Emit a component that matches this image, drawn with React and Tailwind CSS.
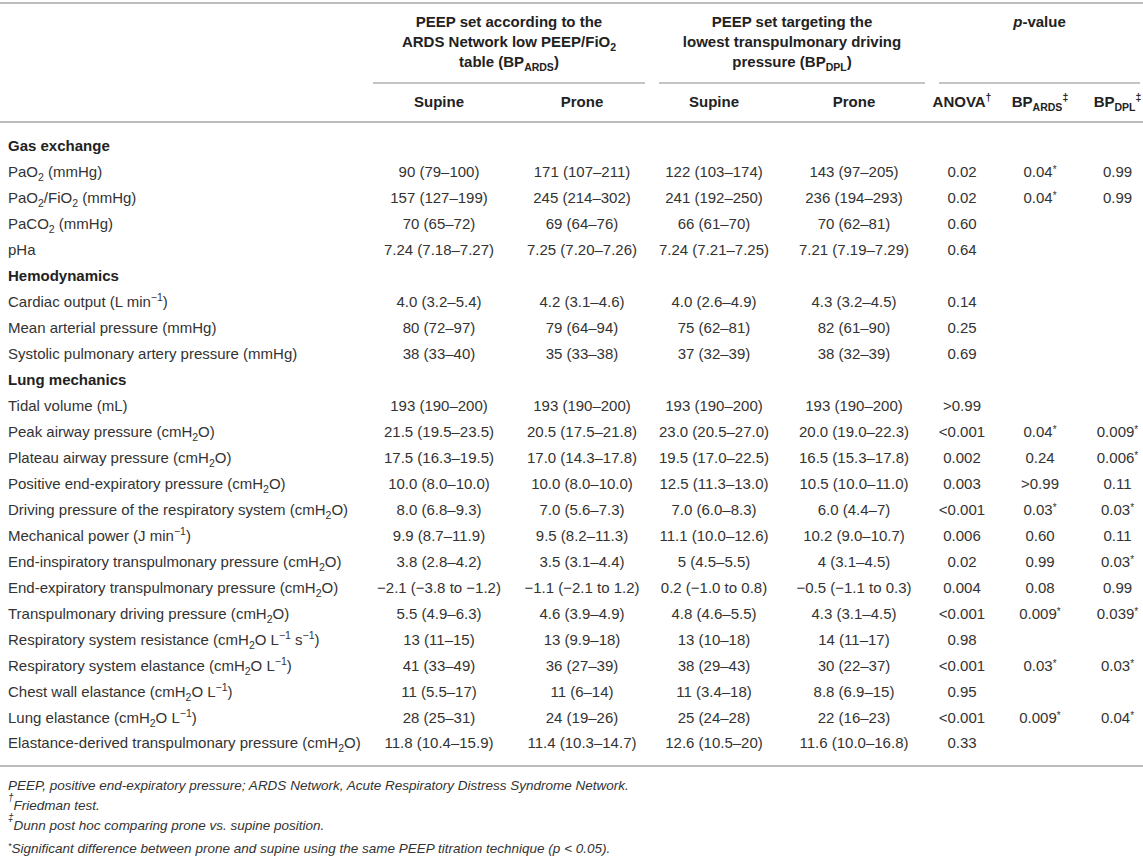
import React from "react";

const Sub = ({ children }) => (
  <span className="relative top-[4px] text-[10.5px] leading-none">{children}</span>
);
const Sup = ({ children }) => (
  <span className="relative -top-[6px] text-[10.5px] leading-none">{children}</span>
);

const H2O = (
  <>
    cmH<Sub>2</Sub>O
  </>
);

// value cell: a trailing "*" is drawn small and raised
function Val({ v }) {
  if (!v) return null;
  if (v.endsWith("*")) {
    return (
      <>
        {v.slice(0, -1)}
        <span className="relative -top-[4px] text-[10px] leading-none">*</span>
      </>
    );
  }
  return v;
}

const rows = [
  { section: "Gas exchange" },
  { label: <>PaO<Sub>2</Sub> (mmHg)</>, v: ["90 (79–100)", "171 (107–211)", "122 (103–174)", "143 (97–205)", "0.02", "0.04*", "0.99"] },
  { label: <>PaO<Sub>2</Sub>/FiO<Sub>2</Sub> (mmHg)</>, v: ["157 (127–199)", "245 (214–302)", "241 (192–250)", "236 (194–293)", "0.02", "0.04*", "0.99"] },
  { label: <>PaCO<Sub>2</Sub> (mmHg)</>, v: ["70 (65–72)", "69 (64–76)", "66 (61–70)", "70 (62–81)", "0.60"] },
  { label: "pHa", v: ["7.24 (7.18–7.27)", "7.25 (7.20–7.26)", "7.24 (7.21–7.25)", "7.21 (7.19–7.29)", "0.64"] },
  { section: "Hemodynamics" },
  { label: <>Cardiac output (L min<Sup>−1</Sup>)</>, v: ["4.0 (3.2–5.4)", "4.2 (3.1–4.6)", "4.0 (2.6–4.9)", "4.3 (3.2–4.5)", "0.14"] },
  { label: "Mean arterial pressure (mmHg)", v: ["80 (72–97)", "79 (64–94)", "75 (62–81)", "82 (61–90)", "0.25"] },
  { label: "Systolic pulmonary artery pressure (mmHg)", v: ["38 (33–40)", "35 (33–38)", "37 (32–39)", "38 (32–39)", "0.69"] },
  { section: "Lung mechanics" },
  { label: "Tidal volume (mL)", v: ["193 (190–200)", "193 (190–200)", "193 (190–200)", "193 (190–200)", ">0.99"] },
  { label: <>Peak airway pressure ({H2O})</>, v: ["21.5 (19.5–23.5)", "20.5 (17.5–21.8)", "23.0 (20.5–27.0)", "20.0 (19.0–22.3)", "<0.001", "0.04*", "0.009*"] },
  { label: <>Plateau airway pressure ({H2O})</>, v: ["17.5 (16.3–19.5)", "17.0 (14.3–17.8)", "19.5 (17.0–22.5)", "16.5 (15.3–17.8)", "0.002", "0.24", "0.006*"] },
  { label: <>Positive end-expiratory pressure ({H2O})</>, v: ["10.0 (8.0–10.0)", "10.0 (8.0–10.0)", "12.5 (11.3–13.0)", "10.5 (10.0–11.0)", "0.003", ">0.99", "0.11"] },
  { label: <>Driving pressure of the respiratory system ({H2O})</>, v: ["8.0 (6.8–9.3)", "7.0 (5.6–7.3)", "7.0 (6.0–8.3)", "6.0 (4.4–7)", "<0.001", "0.03*", "0.03*"] },
  { label: <>Mechanical power (J min<Sup>−1</Sup>)</>, v: ["9.9 (8.7–11.9)", "9.5 (8.2–11.3)", "11.1 (10.0–12.6)", "10.2 (9.0–10.7)", "0.006", "0.60", "0.11"] },
  { label: <>End-inspiratory transpulmonary pressure ({H2O})</>, v: ["3.8 (2.8–4.2)", "3.5 (3.1–4.4)", "5 (4.5–5.5)", "4 (3.1–4.5)", "0.02", "0.99", "0.03*"] },
  { label: <>End-expiratory transpulmonary pressure ({H2O})</>, v: ["−2.1 (−3.8 to −1.2)", "−1.1 (−2.1 to 1.2)", "0.2 (−1.0 to 0.8)", "−0.5 (−1.1 to 0.3)", "0.004", "0.08", "0.99"] },
  { label: <>Transpulmonary driving pressure ({H2O})</>, v: ["5.5 (4.9–6.3)", "4.6 (3.9–4.9)", "4.8 (4.6–5.5)", "4.3 (3.1–4.5)", "<0.001", "0.009*", "0.039*"] },
  { label: <>Respiratory system resistance ({H2O} L<Sup>−1</Sup> s<Sup>−1</Sup>)</>, v: ["13 (11–15)", "13 (9.9–18)", "13 (10–18)", "14 (11–17)", "0.98"] },
  { label: <>Respiratory system elastance ({H2O} L<Sup>−1</Sup>)</>, v: ["41 (33–49)", "36 (27–39)", "38 (29–43)", "30 (22–37)", "<0.001", "0.03*", "0.03*"] },
  { label: <>Chest wall elastance ({H2O} L<Sup>−1</Sup>)</>, v: ["11 (5.5–17)", "11 (6–14)", "11 (3.4–18)", "8.8 (6.9–15)", "0.95"] },
  { label: <>Lung elastance ({H2O} L<Sup>−1</Sup>)</>, v: ["28 (25–31)", "24 (19–26)", "25 (24–28)", "22 (16–23)", "<0.001", "0.009*", "0.04*"] },
  { label: <>Elastance-derived transpulmonary pressure ({H2O})</>, v: ["11.8 (10.4–15.9)", "11.4 (10.3–14.7)", "12.6 (10.5–20)", "11.6 (10.0–16.8)", "0.33"] },
];

export default function App() {
  const last = rows.length - 1;
  return (
    <div className="w-[1143px] overflow-hidden bg-white pt-[2px] font-['Liberation_Sans',Arial,sans-serif] text-[15px] text-[#333]">
      <table className="w-[1147px] table-fixed border-collapse">
        <colgroup>
          <col className="w-[366px]" />
          <col className="w-[146px]" />
          <col className="w-[140px]" />
          <col className="w-[124px]" />
          <col className="w-[156px]" />
          <col className="w-[60px]" />
          <col className="w-[96px]" />
          <col className="w-[59px]" />
        </colgroup>
        <thead className="text-[#222]">
          <tr className="border-t-2 border-[#bdbdbd]">
            <th rowSpan={2} className="border-b-2 border-[#bdbdbd]" />
            <th colSpan={2} className="align-top px-[7px] pt-[8px] font-bold">
              <div className="border-b-2 border-[#c4c4c4] pb-[10px] leading-[20px]">
                PEEP set according to the
                <br />
                ARDS Network low PEEP/FiO<Sub>2</Sub>
                <br />
                table (BP<Sub>ARDS</Sub>)
              </div>
            </th>
            <th colSpan={2} className="align-top px-[7px] pt-[8px] font-bold">
              <div className="border-b-2 border-[#c4c4c4] pb-[10px] leading-[20px]">
                PEEP set targeting the
                <br />
                lowest transpulmonary driving
                <br />
                pressure (BP<Sub>DPL</Sub>)
              </div>
            </th>
            <th colSpan={3} className="align-top px-[7px] pt-[8px] font-bold">
              <div className="h-[72px] border-b-2 border-[#c4c4c4] text-center leading-[20px]">
                <i>p</i>-value
              </div>
            </th>
          </tr>
          <tr className="h-[38px] border-b-2 border-[#bdbdbd]">
            <th className="font-bold">Supine</th>
            <th className="font-bold">Prone</th>
            <th className="font-bold">Supine</th>
            <th className="font-bold">Prone</th>
            <th className="font-bold whitespace-nowrap">
              ANOVA<Sup>†</Sup>
            </th>
            <th className="font-bold whitespace-nowrap">
              BP<Sub>ARDS</Sub>
              <Sup>‡</Sup>
            </th>
            <th className="font-bold whitespace-nowrap">
              BP<Sub>DPL</Sub>
              <Sup>‡</Sup>
            </th>
          </tr>
        </thead>
        <tbody className="border-b-2 border-[#bdbdbd]">
          {rows.map((r, i) => {
            const pad = i === 0 ? "h-[37px] pt-[11px]" : i === last ? "h-[35px] pb-[9px]" : "h-[26px]";
            if (r.section) {
              return (
                <tr key={i}>
                  <td colSpan={8} className={`pl-2 font-bold text-[#222] ${pad}`}>
                    {r.section}
                  </td>
                </tr>
              );
            }
            return (
              <tr key={i}>
                <td className={`whitespace-nowrap pl-2 ${pad}`}>{r.label}</td>
                {[0, 1, 2, 3, 4, 5, 6].map((j) => (
                  <td key={j} className={`whitespace-nowrap text-center ${pad}`}>
                    <Val v={r.v[j]} />
                  </td>
                ))}
              </tr>
            );
          })}
        </tbody>
      </table>

      {/* footnotes */}
      <div className="px-2 pt-[9px] text-[13.5px] italic leading-[20px] text-[#333]">
        <p>PEEP, positive end-expiratory pressure; ARDS Network, Acute Respiratory Distress Syndrome Network.</p>
        <p>
          <span className="relative -top-[9px] text-[10px] leading-none">†</span>Friedman test.
        </p>
        <p>
          <span className="relative -top-[9px] text-[10px] leading-none">‡</span>Dunn post hoc comparing prone vs. supine position.
        </p>
        <p className="mt-[3px]">
          <span className="relative -top-[4px] text-[9px] leading-none">*</span>Significant difference between prone and supine using the same PEEP titration technique (<i>p</i> &lt; 0.05).
        </p>
      </div>
    </div>
  );
}
